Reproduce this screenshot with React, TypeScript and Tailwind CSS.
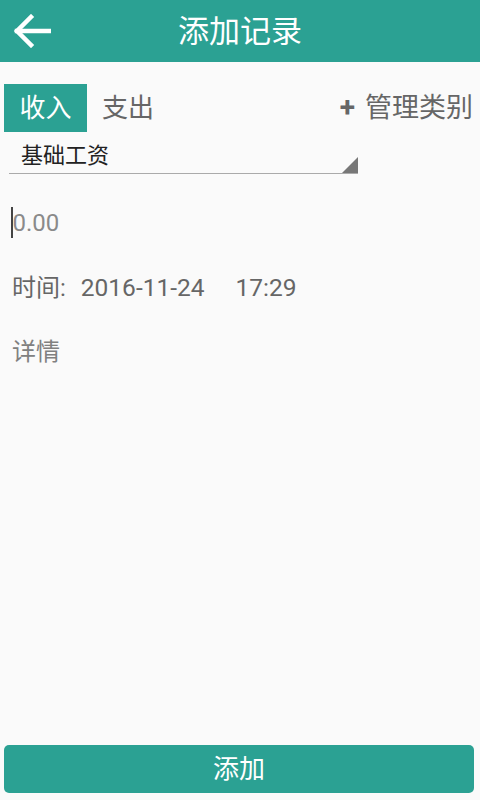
import React from "react";

const font = { fontFamily: '"Roboto", "Noto Sans CJK SC", sans-serif' };

export default function App() {
  return (
    <div className="flex h-[800px] w-[480px] flex-col bg-[#fafafa]" style={font}>
      {/* Header */}
      <div className="relative flex h-[62px] shrink-0 items-center justify-center bg-[#2ba193]">
        <button className="absolute left-[13px] top-[14px] text-white" aria-label="back">
          <svg width="38" height="34" viewBox="0 0 38 34" fill="none" stroke="white" strokeWidth="4.5" strokeLinecap="square">
            <path d="M4 17H36" />
            <path d="M18 3L4 17L18 31" />
          </svg>
        </button>
        <h1 className="text-[31px] leading-none text-white">添加记录</h1>
      </div>

      {/* Type tabs */}
      <div className="mt-[22px] flex h-[48px] items-center pl-[4px] pr-[7px]">
        <div className="flex h-[48px] w-[83px] items-center justify-center bg-[#2ba193] text-[26px] text-white">
          收入
        </div>
        <div className="ml-[15px] text-[26px] text-[#666]">支出</div>
        <div className="ml-auto flex items-center gap-[10px] text-[#666]">
          <span className="text-[28px] font-bold leading-none">+</span>
          <span className="text-[27px]">管理类别</span>
        </div>
      </div>

      {/* Category select */}
      <div className="relative ml-[9px] mt-[9px] h-[33px] w-[349px] border-b border-[#aaa]">
        <span className="absolute left-[12px] top-[2px] text-[22px] leading-[26px] text-[#222]">基础工资</span>
        <div className="absolute bottom-0 right-0 h-0 w-0 border-b-[16px] border-l-[16px] border-b-[#777] border-l-transparent" />
      </div>

      {/* Amount */}
      <div className="ml-[11px] mt-[33px] flex h-[31px] items-center">
        <div className="h-[31px] w-[1.5px] bg-[#444]" />
        <span className="text-[24px] leading-none text-[#8a8a8a]">0.00</span>
      </div>

      {/* Time */}
      <div className="ml-[12px] mt-[34px] flex h-[32px] items-center text-[24px] leading-none text-[#666]">
        <span>时间:</span>
        <span className="ml-[15px] text-[24.5px]">2016-11-24</span>
        <span className="ml-[31px] text-[24.5px]">17:29</span>
      </div>

      {/* Detail */}
      <div className="ml-[12px] mt-[32px] flex h-[32px] items-center text-[24px] leading-none text-[#808080]">详情</div>

      <div className="flex-1" />

      {/* Submit */}
      <div className="px-[4px] pb-[7px] pr-[6px]">
        <button className="flex h-[48px] w-full items-center justify-center rounded-[5px] bg-[#2ba193] text-[26px] text-white">
          添加
        </button>
      </div>
    </div>
  );
}
